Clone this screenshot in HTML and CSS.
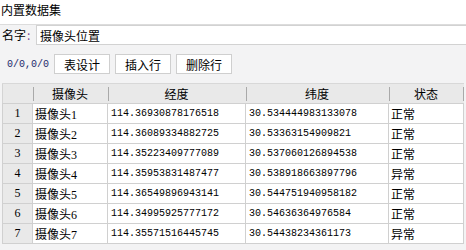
FILE: index.html
```html
<!DOCTYPE html>
<html lang="zh">
<head>
    <meta charset="UTF-8">
    <meta name="viewport" content="width=device-width, initial-scale=1.0">
    <title>内置数据集</title>
    <link rel="stylesheet" href="styles.css">
</head>
<body>
    <div class="title">内置数据集</div>
    <div class="panel">
        <div class="name-row">
            <label class="name-label">名字<span class="colon">:</span></label>
            <input class="name-input" type="text" value="摄像头位置">
        </div>
        <div class="toolbar">
            <span class="counter">0/0,0/0</span>
            <button>表设计</button>
            <button>插入行</button>
            <button>删除行</button>
        </div>
        <table class="grid">
            <colgroup>
                <col class="c-num">
                <col class="c-name">
                <col class="c-lng">
                <col class="c-lat">
                <col class="c-state">
            </colgroup>
            <thead>
                <tr>
                    <th class="corner"></th>
                    <th>摄像头</th>
                    <th>经度</th>
                    <th>纬度</th>
                    <th class="last">状态</th>
                </tr>
            </thead>
            <tbody>
                <tr><td class="num">1</td><td>摄像头<span class="digit">1</span></td><td class="mono">114.36930878176518</td><td class="mono">30.534444983133078</td><td>正常</td></tr>
                <tr><td class="num">2</td><td>摄像头<span class="digit">2</span></td><td class="mono">114.36089334882725</td><td class="mono">30.53363154909821</td><td>正常</td></tr>
                <tr><td class="num">3</td><td>摄像头<span class="digit">3</span></td><td class="mono">114.35223409777089</td><td class="mono">30.537060126894538</td><td>正常</td></tr>
                <tr><td class="num">4</td><td>摄像头<span class="digit">4</span></td><td class="mono">114.35953831487477</td><td class="mono">30.538918663897796</td><td>异常</td></tr>
                <tr><td class="num">5</td><td>摄像头<span class="digit">5</span></td><td class="mono">114.36549896943141</td><td class="mono">30.544751940958182</td><td>正常</td></tr>
                <tr><td class="num">6</td><td>摄像头<span class="digit">6</span></td><td class="mono">114.34995925777172</td><td class="mono">30.54636364976584</td><td>正常</td></tr>
                <tr><td class="num">7</td><td>摄像头<span class="digit">7</span></td><td class="mono">114.35571516445745</td><td class="mono">30.54438234361173</td><td>异常</td></tr>
            </tbody>
        </table>
    </div>
</body>
</html>
```

FILE: styles.css
```css
body {
    margin: 0;
    font-family: "Noto Sans CJK SC", "Liberation Sans", sans-serif;
    font-size: 12px;
    color: #000;
    background-color: #f3f3f4;
    height: 250px;
    overflow: hidden;
}

.title {
    height: 24px;
    line-height: 20px;
    padding-left: 1px;
    background: #fff;
    border-bottom: 1px solid #dcdcdc;
}

.name-row {
    display: flex;
    align-items: center;
    height: 20px;
}

.name-label {
    width: 34px;
    padding-left: 2px;
    line-height: 20px;
}

.colon {
    color: #7a4a9a;
    margin-left: 1px;
}

.name-input {
    flex: 1;
    height: 20px;
    box-sizing: border-box;
    margin: 0 -2px 0 0;
    padding: 0 3px;
    border: 1px solid #d2d2d2;
    background: #fff;
    font-family: "Noto Sans CJK SC", sans-serif;
    font-size: 12px;
    color: #000;
    outline: none;
}

.toolbar {
    display: flex;
    align-items: center;
    gap: 5px;
    height: 38px;
    padding-left: 7px;
}

.counter {
    font-family: "Liberation Mono", monospace;
    font-size: 10px;
    color: #1c2a6c;
    width: 42px;
}

.toolbar button {
    width: 56px;
    height: 20px;
    padding: 0;
    background: #fff;
    border: 1px solid #cfcfcf;
    font-family: "Noto Sans CJK SC", sans-serif;
    font-size: 12px;
    color: #000;
}

.grid {
    margin-left: 2px;
    width: 461px;
    table-layout: fixed;
    border-collapse: collapse;
    border-top: 1px solid #d8d8d8;
    border-left: 1px solid #d4d4d4;
}

.c-num { width: 30px; }
.c-name { width: 75px; }
.c-lng { width: 138px; }
.c-lat { width: 143px; }
.c-state { width: 75px; }

.grid th {
    height: 19px;
    padding: 0;
    font-weight: normal;
    text-align: center;
    background: linear-gradient(#a9a9a9, #a9a9a9) left center / 1px 14px no-repeat, #e9e9e9;
    border-bottom: 1px solid #d0d0d0;
}

.grid th.last {
    background: linear-gradient(#a9a9a9, #a9a9a9) left center / 1px 14px no-repeat,
        linear-gradient(#a9a9a9, #a9a9a9) right center / 1px 14px no-repeat, #e9e9e9;
}

.grid th.corner {
    background: #e9e9e9;
}

.grid td {
    height: 19px;
    padding: 0 0 0 2px;
    background: #fff;
    border: 1px solid #d0d0d0;
    white-space: nowrap;
    overflow: hidden;
}

.grid td.num {
    padding: 0;
    text-align: center;
    background: #e9e9e9;
    font-family: "Liberation Serif", serif;
    font-size: 12px;
}

.grid td.mono {
    padding-left: 3px;
    font-family: "Liberation Mono", monospace;
    font-size: 10px;
}

.digit {
    font-family: "Liberation Serif", serif;
}
```
